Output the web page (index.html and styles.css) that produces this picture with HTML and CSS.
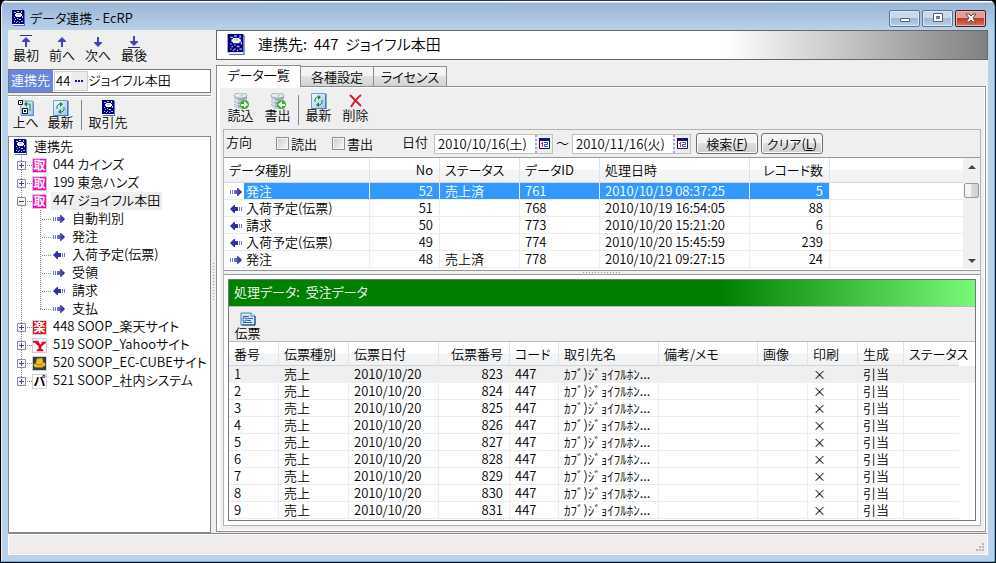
FILE: index.html
```html
<!DOCTYPE html>
<html lang="ja">
<head>
<meta charset="utf-8">
<title>データ連携 - EcRP</title>
<link rel="stylesheet" href="styles.css">
</head>
<body>
<svg class="defs" width="0" height="0" aria-hidden="true">
  <defs>
    <linearGradient id="g-blue" x1="0" y1="0" x2="1" y2="0"><stop offset="0" stop-color="#7a7ad8"/><stop offset="1" stop-color="#1c1c90"/></linearGradient>
    <linearGradient id="g-page" x1="0" y1="0" x2="1" y2="1"><stop offset="0" stop-color="#f4faff"/><stop offset="1" stop-color="#98c4ee"/></linearGradient>
    <symbol id="book" viewBox="0 0 16 16">
      <path d="M2 0h12v14H2z" fill="#00007c"/><path d="M14 1h1v15H3v-1h11z" fill="#5a6ab8"/><path d="M3 14h11v1H3z" fill="#fff"/>
      <path d="M4 2h2v1H4zM11 1h1v2h-1zM4 7h1v1H4zM12 6h1v2h-1zM5 9h1v1H5zM7 8h1v1H7zM9 9h2v1H9zM4 11h1v1H4zM7 11h1v1H7zM11 11h2v1h-2zM6 12h1v1H6zM9 12h1v1H9zM7 1h2v1H7z" fill="#b9c4f4"/>
      <path d="M5 4h1V3h5v1h1v2h-1v1H6V6H5z" fill="#fff"/><path d="M7 4h3v1H7z" fill="#b8b8c8"/>
    </symbol>
    <symbol id="arr-r" viewBox="0 0 12 8"><path d="M0 2h1v4H0zM2 2h1v4H2z" fill="#7474d4"/><path d="M4 2h3V0h1l4 4-4 4H7V6H4z" fill="url(#g-blue)"/></symbol>
    <symbol id="arr-l" viewBox="0 0 12 8"><path d="M11 2h1v4h-1zM9 2h1v4H9z" fill="#7474d4"/><path d="M8 2H5V0H4L0 4l4 4h1V6h3z" fill="#3030a8"/></symbol>
    <symbol id="up" viewBox="0 0 12 14"><path d="M6 3l4 4v1H7v5H5V8H2V7z" fill="#4646bc"/></symbol>
    <symbol id="down" viewBox="0 0 12 14"><path d="M6 13l4-4V8H7V3H5v5H2v1z" fill="#4646bc"/></symbol>
    <symbol id="top" viewBox="0 0 12 14"><path d="M0 1h12v1H0z" fill="#2c2ca0"/><path d="M6 3l4 4v1H7v5H5V8H2V7z" fill="#4646bc"/></symbol>
    <symbol id="bottom" viewBox="0 0 12 14"><path d="M0 13h12v1H0z" fill="#2c2ca0"/><path d="M6 12l4-4V7H7V2H5v5H2v1z" fill="#4646bc"/></symbol>
    <symbol id="refresh" viewBox="0 0 16 16"><path d="M.5.5h14v15H.5z" fill="url(#g-page)" stroke="#6d9fd0"/><path d="M15 1v15H1" fill="none" stroke="#2f5d96"/>
      <path d="M4 9V6l2-2h1M11 7v3l-2 2H8" fill="none" stroke="#258335"/><path d="M7 2l3 2-3 3zM8 9l-3 3 3 2z" fill="#258335"/></symbol>
    <symbol id="parent" viewBox="0 0 16 16"><path d="M3 1h12v14H3z" fill="url(#g-page)" stroke="#6d9fd0"/><path d="M16 2v14H3" fill="none" stroke="#2f5d96"/>
      <path d="M.5.5h4v4h-4zM4.500 8.500h5v5h-5z" fill="#fff" stroke="#111"/><path d="M2 2h1v1H2zM6 10h2v2H6z" fill="#111"/><path d="M12 11V4H9" fill="none" stroke="#258335"/><path d="M9 1v6L6 4z" fill="#258335"/></symbol>
    <symbol id="db" viewBox="0 0 16 16"><path d="M1 2v10c0 2 3 4 7 4s6-2 6-4V2z" fill="#c3ccd1"/><path d="M1 4c2 3 11 3 13 0M1 8c2 3 11 3 13 0M1 11c2 3 11 3 13 0" fill="none" stroke="#718a98"/><path d="M2 3v10M4 5v9" stroke="#eef4f6"/><ellipse cx="7.500" cy="2.500" rx="6.500" ry="2.500" fill="#e4f0f0" stroke="#9fadb5"/><path d="M7 1l4 1-3 2z" fill="#a4d9c2"/></symbol>
    <symbol id="db-in" viewBox="0 0 16 16"><use href="#db"/><circle cx="11.500" cy="11.500" r="4.500" fill="#41a832"/><path d="M8 11h3V8l4 3.500-4 3.500v-2H8z" fill="#fff"/></symbol>
    <symbol id="db-out" viewBox="0 0 16 16"><use href="#db"/><circle cx="11.500" cy="11.500" r="4.500" fill="#41a832"/><path d="M15 11h-3V8l-4 3.500 4 3.500v-2h3z" fill="#fff"/></symbol>
    <symbol id="del" viewBox="0 0 16 16"><path d="M2 2l11 11M13 2C9 5 6 9 3 14" fill="none" stroke="#d41c2c" stroke-width="2"/></symbol>
    <symbol id="slip" viewBox="0 0 16 14"><path d="M1 1h10l4 3v9H1z" fill="#d3e6fb" stroke="#4d7fbd"/><path d="M15 4v9H2" fill="none" stroke="#1c4380"/><path d="M11 1v3h4" fill="#fff" stroke="#4d7fbd"/><path d="M3 4.500h6M7 6.500h6M7 8.500h4M3 10.500h9" stroke="#2c68b2"/><path d="M3 6h3v3H3z" fill="#fff" stroke="#2c68b2"/></symbol>
    <symbol id="cal" viewBox="0 0 11 11"><path d="M.5.5h10v10H.5z" fill="#fff" stroke="#141480"/><path d="M0 0h11v3H0z" fill="#141480"/><path d="M3.500 4v5M2 5.500h1" fill="none" stroke="#e02828"/><path d="M5 4.500h3.500v2h-3v2H9" fill="none" stroke="#2850c8"/></symbol>
    <symbol id="plus" viewBox="0 0 9 9"><path d="M.5.5h8v8h-8z" fill="#f6f6f6" stroke="#8c8c8c"/><path d="M2 4.500h5M4.500 2v5" stroke="#2c4c9c"/></symbol>
    <symbol id="minus" viewBox="0 0 9 9"><path d="M.5.5h8v8h-8z" fill="#f6f6f6" stroke="#8c8c8c"/><path d="M2 4.500h5" stroke="#2c4c9c"/></symbol>
    <symbol id="yahoo" viewBox="0 0 16 16"><path d="M0 0h16v16H0z" fill="#fff"/><path d="M1 3h6v1L9 7l2-2h-1V4h5v1l-5 4v3h2v2H5v-2h2V9L3 5H1z" fill="#e0082c"/></symbol>
    <symbol id="cube" viewBox="0 0 16 16"><path d="M0 0h16v16H0z" fill="#2c3c56"/><path d="M5 3l6-1 1 5c2 0 3 1 2 3-2 3-9 4-12 1-1-2 0-3 2-3z" fill="#f2bd16"/><path d="M4 8c2 2 6 2 8-1M5 12c3 1 6 0 8-1" fill="none" stroke="#9a6a08"/></symbol>
  </defs>
</svg>
<div class="window">
  <header class="titlebar">
    <svg class="i16"><use href="#book"/></svg>
    <h1>データ連携 - EcRP</h1>
    <div class="winbtns">
      <button type="button" aria-label="最小化"><svg width="12" height="12"><path d="M1.500 6.500h9v3h-9z" fill="#fff" stroke="#5a6070"/></svg></button>
      <button type="button" aria-label="最大化"><svg width="12" height="12"><path d="M1.500 1.500h9v8h-9z" fill="#fff" stroke="#5a6070"/><path d="M4.500 4.500h3v2h-3z" fill="#8aa5c8" stroke="#5a6070"/></svg></button>
      <button type="button" class="close" aria-label="閉じる"><svg width="12" height="12"><path d="M1 2h3l2 2 2-2h3L8 6l3 4H8L6 8l-2 2H1l3-4z" fill="#fff" stroke="#604448"/></svg></button>
    </div>
  </header>

  <div class="client">
    <div class="work">
      <aside class="side">
        <div class="toolbar nav">
          <button type="button"><svg class="nv"><use href="#top"/></svg>最初</button>
          <button type="button"><svg class="nv"><use href="#up"/></svg>前へ</button>
          <button type="button"><svg class="nv"><use href="#down"/></svg>次へ</button>
          <button type="button"><svg class="nv"><use href="#bottom"/></svg>最後</button>
        </div>
        <div class="partner">
          <label for="code">連携先</label>
          <div class="code"><input id="code" type="text" value="44"><button type="button" aria-label="参照"><i></i><i></i><i></i></button></div>
          <span>ジョイフル本田</span>
        </div>
        <div class="toolbar links">
          <button type="button"><svg class="i16"><use href="#parent"/></svg>上へ</button>
          <button type="button"><svg class="i16"><use href="#refresh"/></svg>最新</button>
          <span class="vsep"></span>
          <button type="button" class="wide"><svg class="i16"><use href="#book"/></svg>取引先</button>
        </div>
        <ul class="tree">
          <li class="root"><svg class="i16"><use href="#book"/></svg><span class="name">連携先</span></li>
          <li><span class="g exp"><svg><use href="#plus"/></svg></span><b class="ico tori">取</b><span class="name">044 カインズ</span></li>
          <li><span class="g exp"><svg><use href="#plus"/></svg></span><b class="ico tori">取</b><span class="name">199 東急ハンズ</span></li>
          <li><span class="g exp"><svg><use href="#minus"/></svg></span><b class="ico tori">取</b><span class="name sel">447 ジョイフル本田</span></li>
          <li><span class="g"></span><span class="g branch"></span><svg class="arr"><use href="#arr-r"/></svg><span class="name">自動判別</span></li>
          <li><span class="g"></span><span class="g branch"></span><svg class="arr"><use href="#arr-r"/></svg><span class="name">発注</span></li>
          <li><span class="g"></span><span class="g branch"></span><svg class="arr"><use href="#arr-l"/></svg><span class="name">入荷予定(伝票)</span></li>
          <li><span class="g"></span><span class="g branch"></span><svg class="arr"><use href="#arr-r"/></svg><span class="name">受領</span></li>
          <li><span class="g"></span><span class="g branch"></span><svg class="arr"><use href="#arr-l"/></svg><span class="name">請求</span></li>
          <li><span class="g"></span><span class="g branch end"></span><svg class="arr"><use href="#arr-r"/></svg><span class="name">支払</span></li>
          <li><span class="g exp"><svg><use href="#plus"/></svg></span><b class="ico raku">楽</b><span class="name">448 SOOP_楽天サイト</span></li>
          <li><span class="g exp"><svg><use href="#plus"/></svg></span><svg class="ico"><use href="#yahoo"/></svg><span class="name">519 SOOP_Yahooサイト</span></li>
          <li><span class="g exp"><svg><use href="#plus"/></svg></span><svg class="ico"><use href="#cube"/></svg><span class="name">520 SOOP_EC-CUBEサイト</span></li>
          <li><span class="g exp end"><svg><use href="#plus"/></svg></span><b class="ico pa">パ</b><span class="name">521 SOOP_社内システム</span></li>
        </ul>
      </aside>
      <div class="splitv"><span></span></div>
      <main class="main">
        <div class="banner"><svg><use href="#book"/></svg><h2>連携先:&nbsp; 447&nbsp; ジョイフル本田</h2></div>
        <div class="tabs" role="tablist">
          <button type="button" role="tab" aria-selected="true" class="on">データ一覧</button>
          <button type="button" role="tab" aria-selected="false">各種設定</button>
          <button type="button" role="tab" aria-selected="false">ライセンス</button>
        </div>
        <div class="panel">
          <div class="inner">
            <div class="toolbar data">
              <button type="button"><svg class="i16"><use href="#db-in"/></svg>読込</button>
              <button type="button"><svg class="i16"><use href="#db-out"/></svg>書出</button>
              <span class="vsep"></span>
              <button type="button"><svg class="i16"><use href="#refresh"/></svg>最新</button>
              <button type="button"><svg class="i16"><use href="#del"/></svg>削除</button>
            </div>
            <div class="group">
              <form class="filter">
                <span class="cap">方向</span>
                <label class="chk"><input type="checkbox">読出</label>
                <label class="chk"><input type="checkbox">書出</label>
                <label class="cap date" for="from">日付</label>
                <div class="datebox"><input id="from" type="text" value="2010/10/16(土)"><button type="button" aria-label="開始日"><svg><use href="#cal"/></svg></button></div>
                <label class="tilde" for="to">～</label>
                <div class="datebox"><input id="to" type="text" value="2010/11/16(火)"><button type="button" aria-label="終了日"><svg><use href="#cal"/></svg></button></div>
                <button type="button" class="push">検索(<u>F</u>)</button>
                <button type="button" class="push">クリア(<u>L</u>)</button>
              </form>
              <div class="upper">
                <table class="grid jobs">
                  <colgroup><col class="w146"><col class="w70"><col class="w80"><col class="w80"><col class="w150"><col class="w80"><col></colgroup>
                  <thead><tr><th>データ種別</th><th class="num">No</th><th>ステータス</th><th>データID</th><th>処理日時</th><th class="num">レコード数</th><th></th></tr></thead>
                  <tbody>
                    <tr class="cur"><td class="kind"><svg class="arr"><use href="#arr-r"/></svg><span>発注</span></td><td class="num">52</td><td>売上済</td><td>761</td><td>2010/10/19 08:37:25</td><td class="num">5</td><td></td></tr>
                    <tr><td class="kind"><svg class="arr"><use href="#arr-l"/></svg><span>入荷予定(伝票)</span></td><td class="num">51</td><td></td><td>768</td><td>2010/10/19 16:54:05</td><td class="num">88</td><td></td></tr>
                    <tr><td class="kind"><svg class="arr"><use href="#arr-l"/></svg><span>請求</span></td><td class="num">50</td><td></td><td>773</td><td>2010/10/20 15:21:20</td><td class="num">6</td><td></td></tr>
                    <tr><td class="kind"><svg class="arr"><use href="#arr-l"/></svg><span>入荷予定(伝票)</span></td><td class="num">49</td><td></td><td>774</td><td>2010/10/20 15:45:59</td><td class="num">239</td><td></td></tr>
                    <tr><td class="kind"><svg class="arr"><use href="#arr-r"/></svg><span>発注</span></td><td class="num">48</td><td>売上済</td><td>778</td><td>2010/10/21 09:27:15</td><td class="num">24</td><td></td></tr>
                  </tbody>
                </table>
                <div class="scroll">
                  <button type="button" aria-label="上へスクロール"><svg width="8" height="4"><path d="M0 4l4-4 4 4z" fill="#444"/></svg></button>
                  <span class="thumb"></span>
                  <button type="button" aria-label="下へスクロール"><svg width="8" height="4"><path d="M0 0l4 4 4-4z" fill="#444"/></svg></button>
                </div>
              </div>
              <div class="splith"><span></span></div>
              <section class="lower">
                <h3>処理データ:&nbsp; 受注データ</h3>
                <div class="toolbar slip"><button type="button"><svg class="i16"><use href="#slip"/></svg>伝票</button></div>
                <table class="grid slips">
                  <colgroup><col class="w50"><col class="w70"><col class="w90"><col class="w71"><col class="w49"><col class="w100"><col class="w99"><col class="w50"><col class="w50"><col class="w46"><col class="w55"><col></colgroup>
                  <thead><tr><th>番号</th><th>伝票種別</th><th>伝票日付</th><th class="num">伝票番号</th><th>コード</th><th>取引先名</th><th>備考/メモ</th><th>画像</th><th>印刷</th><th>生成</th><th>ステータス</th><th></th></tr></thead>
                  <tbody>
                    <tr class="hot"><td>1</td><td>売上</td><td>2010/10/20</td><td class="num">823</td><td>447</td><td>ｶﾌﾞ)ｼﾞｮｲﾌﾙﾎﾝ...</td><td></td><td></td><td class="x">×</td><td>引当</td><td></td><td></td></tr>
                    <tr><td>2</td><td>売上</td><td>2010/10/20</td><td class="num">824</td><td>447</td><td>ｶﾌﾞ)ｼﾞｮｲﾌﾙﾎﾝ...</td><td></td><td></td><td class="x">×</td><td>引当</td><td></td><td></td></tr>
                    <tr><td>3</td><td>売上</td><td>2010/10/20</td><td class="num">825</td><td>447</td><td>ｶﾌﾞ)ｼﾞｮｲﾌﾙﾎﾝ...</td><td></td><td></td><td class="x">×</td><td>引当</td><td></td><td></td></tr>
                    <tr><td>4</td><td>売上</td><td>2010/10/20</td><td class="num">826</td><td>447</td><td>ｶﾌﾞ)ｼﾞｮｲﾌﾙﾎﾝ...</td><td></td><td></td><td class="x">×</td><td>引当</td><td></td><td></td></tr>
                    <tr><td>5</td><td>売上</td><td>2010/10/20</td><td class="num">827</td><td>447</td><td>ｶﾌﾞ)ｼﾞｮｲﾌﾙﾎﾝ...</td><td></td><td></td><td class="x">×</td><td>引当</td><td></td><td></td></tr>
                    <tr><td>6</td><td>売上</td><td>2010/10/20</td><td class="num">828</td><td>447</td><td>ｶﾌﾞ)ｼﾞｮｲﾌﾙﾎﾝ...</td><td></td><td></td><td class="x">×</td><td>引当</td><td></td><td></td></tr>
                    <tr><td>7</td><td>売上</td><td>2010/10/20</td><td class="num">829</td><td>447</td><td>ｶﾌﾞ)ｼﾞｮｲﾌﾙﾎﾝ...</td><td></td><td></td><td class="x">×</td><td>引当</td><td></td><td></td></tr>
                    <tr><td>8</td><td>売上</td><td>2010/10/20</td><td class="num">830</td><td>447</td><td>ｶﾌﾞ)ｼﾞｮｲﾌﾙﾎﾝ...</td><td></td><td></td><td class="x">×</td><td>引当</td><td></td><td></td></tr>
                    <tr><td>9</td><td>売上</td><td>2010/10/20</td><td class="num">831</td><td>447</td><td>ｶﾌﾞ)ｼﾞｮｲﾌﾙﾎﾝ...</td><td></td><td></td><td class="x">×</td><td>引当</td><td></td><td></td></tr>
                  </tbody>
                </table>
              </section>
            </div>
          </div>
        </div>
      </main>
    </div>
    <footer class="status"><svg width="9" height="9"><path d="M6 0h2v2H6zM3 3h2v2H3zM6 3h2v2H6zM0 6h2v2H0zM3 6h2v2H3zM6 6h2v2H6z" fill="#b8b4b4"/></svg></footer>
  </div>
</div>
</body>
</html>
```
FILE: styles.css
```css
* { box-sizing: border-box; }
body { margin: 0; background: #000; }
body, button, input {
  font-family: "Noto Sans CJK JP", sans-serif;
  font-size: 13px;
  font-weight: 350;
  line-height: 16px;
  color: #000;
  font-feature-settings: "palt";
}
svg { display: block; flex: none; }
.defs { position: absolute; }
.i16 { width: 16px; height: 16px; }
.arr { width: 12px; height: 8px; }
button { padding: 0; border: 0; background: none; }
h1, h2, h3 { margin: 0; font-weight: 350; }

.window {
  min-height: 100vh;
  display: flex;
  flex-direction: column;
  padding: 0 6px 7px 6px;
  background: linear-gradient(#2b3440 0 1px, #fff 1px 2px, #9ab6d6 3px, #b9d1ea 30px);
  border: solid #000;
  border-width: 0 1px 1px;
  border-radius: 7px 7px 0 0;
  box-shadow: inset -1px -1px #35c8e8, inset 1px 0 #e4eff8;
}
.titlebar { display: flex; align-items: center; height: 30px; padding: 6px 3px 0 3px; }
.titlebar h1 { flex: 1; margin-left: 4px; font-size: 13px; line-height: 20px; }
.winbtns { display: flex; gap: 2px; }
.winbtns button {
  width: 31px;
  height: 17px;
  display: grid;
  place-items: center;
  border: 1px solid #5c7491;
  border-radius: 2px;
  background: linear-gradient(#c8d9ec 45%, #9fb9d6 50%, #b8d0e8);
  box-shadow: inset 0 0 0 1px #dce8f4;
}
.winbtns .close { border-color: #4c1822; background: linear-gradient(#e0a094 45%, #bc3c24 50%, #d47860); box-shadow: inset 0 0 0 1px #e8b4a8; }

.client { flex: 1; display: flex; flex-direction: column; margin: 0 1px; background: #efefef; }
.work { flex: 1; display: flex; }
.side { width: 203px; display: flex; flex-direction: column; }

.toolbar { display: flex; align-items: flex-start; }
.toolbar button { width: 37px; display: flex; flex-direction: column; align-items: center; line-height: 12px; }
.vsep { width: 1px; height: 30px; background: #888; }
.nav { height: 39px; padding: 4px 0 0; }
.nav button { width: 36px; }
.nv { width: 12px; height: 14px; }
.nav button svg { margin-bottom: 1px; }
.partner { display: flex; align-items: center; height: 24px; border: 1px solid #777; background: #fff; }
.partner label { align-self: stretch; width: 44px; padding-left: 2px; line-height: 20px; background: #6a86dc; color: #fff; }
.code { display: flex; width: 34px; height: 20px; margin-left: 1px; border: 1px solid #ccc; }
.code input { width: 16px; padding: 0 0 0 1px; border: 0; outline: 0; }
.code button { flex: 1; display: flex; justify-content: center; align-items: center; gap: 1px; background: #ececec; }
.code i { width: 2px; height: 2px; background: #141480; }
.partner span { padding-bottom: 2px; }
.links { height: 41px; margin-top: 2px; padding-top: 4px; border-top: 1px solid #999; box-shadow: inset 0 1px #fff; }
.links button { width: 35px; }
.links .vsep { margin: 0 3px; }
.links .wide { width: 46px; }

.tree { flex: 1; margin: 0; padding: 1px 0 0; list-style: none; background: #fff; border: 1px solid #828790; }
.tree li { display: flex; align-items: center; height: 18px; white-space: nowrap; }
.root { padding-left: 3px; }
.tree .name { margin-left: 4px; padding: 0 2px 2px; line-height: 16px; }
.tree .arr + .name { margin-left: 5px; }
.root .name { margin-left: 4px; }
.tree .sel { background: #eee; }
.g {
  width: 23px;
  height: 18px;
  display: flex;
  align-items: center;
  padding-left: 8px;
  background: repeating-linear-gradient(#888 0 1px, #fff 1px 2px) 12px 0 / 1px 18px no-repeat;
}
.g svg { width: 9px; height: 9px; }
.g.exp, .g.branch {
  background:
    repeating-linear-gradient(#888 0 1px, #fff 1px 2px) 12px 0 / 1px 18px no-repeat,
    repeating-linear-gradient(90deg, #888 0 1px, #fff 1px 2px) 12px 9px / 12px 1px no-repeat;
}
.g.branch { width: 21px; background-position: 8px 0, 8px 9px; }
.g.end { background-size: 1px 9px, 12px 1px; }
.ico { width: 15px; height: 15px; font-size: 12px; font-weight: 700; line-height: 13px; text-align: center; outline: 1px solid #d0d0d0; outline-offset: -1px; }
.tori { background: #f0c; color: #fff; }
.raku { background: #d8181c; color: #fff; }

.splitv { width: 5px; display: flex; align-items: center; justify-content: center; }
.splitv span { width: 1px; height: 37px; background: repeating-linear-gradient(#999 0 1px, #efefef 1px 3px); }

.main { flex: 1; min-width: 0; display: flex; flex-direction: column; }
.banner {
  display: flex;
  align-items: center;
  height: 30px;
  padding-left: 8px;
  border: 1px solid #666;
  background: linear-gradient(90deg, #fff 66%, #808080);
}
.banner svg { width: 21px; height: 21px; margin-bottom: 2px; }
.banner h2 { margin-left: 12px; padding-bottom: 2px; font-size: 15px; line-height: 24px; }
.tabs { display: flex; align-items: flex-end; height: 26px; padding-top: 4px; }
.tabs button { height: 20px; width: 73px; border: 1px solid #8c8e94; border-width: 1px 1px 0 0; background: linear-gradient(#f4f4f4 45%, #e2e2e2 50%, #d2d2d2); }
.tabs .on { width: 85px; height: 22px; margin-bottom: -1px; padding-bottom: 3px; border-left-width: 1px; background: #fff; z-index: 1; }
.panel { flex: 1; display: flex; margin: 0 2px 1px 0; padding: 1px 1px 1px 3px; background: #fff; border: 1px solid #8c8e94; box-shadow: 1px 0 #fff; }
.inner { flex: 1; min-width: 0; display: flex; flex-direction: column; padding: 5px 3px 4px; background: #efefef; }
.data { height: 36px; }
.data button { width: 37px; }
.data > :first-child { margin-left: -1px; }
.data .vsep { margin: 2px 1px 0 2px; }
.group { flex: 1; display: flex; flex-direction: column; border: 1px solid #b4b4b4; background: #fff; }
.filter { display: flex; align-items: center; height: 28px; padding-left: 2px; background: #efefef; border-bottom: 1px solid #999; }
.cap { width: 50px; line-height: 16px; padding-bottom: 4px; }
.cap.date { width: 32px; margin-left: 14px; }
.chk { display: flex; align-items: center; width: 56px; gap: 2px; }
.chk input { appearance: none; width: 13px; height: 13px; margin: 0; border: 1px solid #8e8f8f; background: linear-gradient(135deg, #c8ccd0, #f8f8f8); box-shadow: inset 0 0 0 1px #f4f4f4; }
.datebox { display: flex; width: 119px; height: 20px; border: 1px solid #c0c0c0; background: #fff; }
.datebox input { flex: 1; min-width: 0; padding: 0 0 0 3px; border: 0; outline: 0; background: none; }
.datebox button { width: 17px; display: grid; place-items: center; background: #eee; border-left: 2px dotted #aab; }
.datebox svg { width: 11px; height: 11px; }
.tilde { width: 19px; padding-bottom: 2px; text-align: center; }
.push { width: 62px; height: 21px; margin-left: 5px; line-height: 18px; border: 1px solid #707070; border-radius: 3px; background: linear-gradient(#f3f3f3 45%, #dedede 50%, #d0d0d0); box-shadow: inset 0 0 0 1px #fafafa; }
.push + .push { margin-left: 3px; }

.upper { display: flex; height: 113px; padding-bottom: 1px; border-bottom: 1px solid #999; }
.grid { table-layout: fixed; border-collapse: separate; border-spacing: 0; width: 100%; }
.upper .grid { flex: 1; width: 0; height: 110px; }
.grid th, .grid td { height: 17px; padding: 0 0 0 5px; line-height: 16px; font-weight: 350; text-align: left; white-space: nowrap; border: solid #ececec; border-width: 0 1px 1px 0; }
.grid th { height: 25px; border-color: #e2e3e5; border-bottom-color: #d5d5d5; background: linear-gradient(#fff 45%, #f5f6f8 50%, #f0f1f3); }
.grid .num { padding: 0 6px 0 0; text-align: right; }
.grid th:last-child, .grid td:last-child { border-right: 0; }
.w146 { width: 146px; } .w70 { width: 70px; } .w80 { width: 80px; } .w150 { width: 150px; }
.w50 { width: 50px; } .w90 { width: 90px; } .w71 { width: 71px; } .w49 { width: 49px; }
.w100 { width: 100px; } .w99 { width: 99px; } .w46 { width: 46px; } .w55 { width: 55px; }
.kind .arr { display: inline-block; margin: 0 2px 0 6px; }
.grid .kind { padding: 0; }
.kind span { display: inline-block; padding-left: 2px; }
.cur td { color: #fff; background: #3399ff; }
.cur td:last-child { background: #fff; }
.cur .kind { background: linear-gradient(90deg, #fff 20px, #3399ff 20px); }
.scroll { width: 17px; display: flex; flex-direction: column; align-items: center; background: #f0f0f0; }
.scroll button { width: 17px; height: 17px; display: grid; place-items: center; }
.scroll .thumb { width: 15px; height: 15px; margin: 8px 0 auto; border: 1px solid #979797; border-radius: 2px; background: linear-gradient(90deg, #f5f5f5 45%, #dcdcdc 50%, #cfcfcf); }
.splith { height: 4px; display: grid; place-items: center; background: #efefef; border-bottom: 1px solid #999; }
.splith span { width: 38px; height: 1px; background: repeating-linear-gradient(90deg, #999 0 1px, #efefef 1px 3px); }

.lower { flex: 1; margin: 4px; border: 1px solid #777; background: #fff; }
.lower h3 { height: 26px; padding-left: 5px; font-size: 13px; line-height: 24px; color: #fff; background: linear-gradient(90deg, #008000 66%, #78fa78); }
.slip { height: 36px; padding-top: 4px; background: #efefef; border: solid #bbb; border-width: 1px 0; }
.slips th:nth-last-child(-n+2), .slips td:nth-last-child(-n+2) { border-right: 0; }
.slips th:last-child, .slips td:last-child { border-bottom-color: #fff; }
.slips th:last-child { background: #fff; }
.slips th { height: 24px; }
.slips .hot td { background: #efefef; border-color: #efefef; }

.status { display: flex; align-items: flex-end; justify-content: flex-end; height: 22px; padding: 0 2px 2px; background: #f0eceb; border: 1px solid #fff; border-top: 1px solid #888; box-shadow: inset 0 1px #fff; }
```
